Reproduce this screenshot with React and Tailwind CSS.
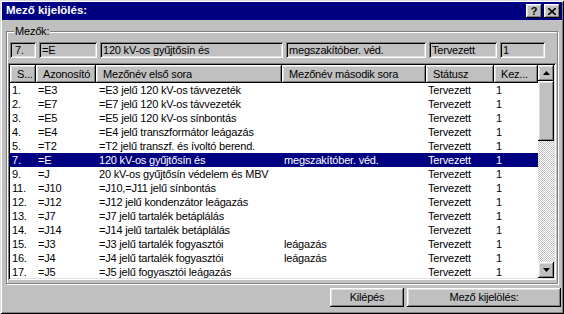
import React from "react";

const rows = [
  ["1.", "=E3", "=E3 jelű 120 kV-os távvezeték", ""],
  ["2.", "=E7", "=E7 jelű 120 kV-os távvezeték", ""],
  ["3.", "=E5", "=E5 jelű 120 kV-os sínbontás", ""],
  ["4.", "=E4", "=E4 jelű transzformátor leágazás", ""],
  ["5.", "=T2", "=T2 jelű transzf. és ívoltó berend.", ""],
  ["7.", "=E", "120 kV-os gyűjtősín és", "megszakítóber. véd."],
  ["9.", "=J", "20 kV-os gyűjtősín védelem és MBV", ""],
  ["11.", "=J10", "=J10,=J11 jelű sínbontás", ""],
  ["12.", "=J12", "=J12 jelű kondenzátor leágazás", ""],
  ["13.", "=J7", "=J7 jelű tartalék betáplálás", ""],
  ["14.", "=J14", "=J14 jelű tartalék betáplálás", ""],
  ["15.", "=J3", "=J3 jelű tartalék fogyasztói", "leágazás"],
  ["16.", "=J4", "=J4 jelű tartalék fogyasztói", "leágazás"],
  ["17.", "=J5", "=J5 jelű fogyasztói leágazás", ""],
];

const raised =
  "shadow-[inset_-1px_-1px_#000,inset_1px_1px_#fff,inset_-2px_-2px_#808080,inset_2px_2px_#dfdfdf]";
const sunken =
  "shadow-[inset_1px_1px_#808080,inset_-1px_-1px_#fff,inset_2px_2px_#000,inset_-2px_-2px_#dfdfdf]";

function Field({ w, children }) {
  return (
    <div className={`${w} h-[16px] ${sunken} pl-[3px] flex items-center leading-none overflow-hidden whitespace-nowrap`}>
      {children}
    </div>
  );
}

function HeadCell({ w, children }) {
  return (
    <div className={`${w} h-full ${raised} pl-[7px] flex items-center whitespace-nowrap overflow-hidden shrink-0`}>
      {children}
    </div>
  );
}

function Arrow({ up }) {
  return (
    <svg width="7" height="4" viewBox="0 0 7 4">
      <polygon points={up ? "3.5,0 7,4 0,4" : "0,0 7,0 3.5,4"} fill="#000" />
    </svg>
  );
}

export default function App() {
  return (
    <div className="w-[564px] h-[314px] bg-[#c0c0c0] p-[2px] flex flex-col text-[11px] tracking-[-0.2px] text-black font-['Liberation_Sans',Arial,sans-serif] shadow-[inset_1px_1px_#dfdfdf,inset_-1px_-1px_#000,inset_2px_2px_#fff,inset_-2px_-2px_#808080]">
      <div className="h-[18px] bg-[#000080] flex items-center pl-[4px] pr-[2px] shrink-0">
        <span className="text-white font-bold text-[11.5px] tracking-normal leading-none">Mező kijelölés:</span>
        <div className="ml-auto flex gap-[2px]">
          <div className={`w-[16px] h-[14px] bg-[#c0c0c0] ${raised} flex items-center justify-center font-bold text-[11px] leading-none`}>?</div>
          <div className={`w-[16px] h-[14px] bg-[#c0c0c0] ${raised} flex items-center justify-center`}>
            <svg width="8" height="7" viewBox="0 0 8 7">
              <path d="M0 0 L8 7 M8 0 L0 7" stroke="#000" strokeWidth="1.6" />
            </svg>
          </div>
        </div>
      </div>

      <div className="relative mt-[11px] ml-[4px] w-[552px] h-[253px] border border-[#808080] shadow-[inset_1px_1px_#fff,1px_1px_#fff] pl-[1px] pt-[10px] flex flex-col">
        <span className="absolute left-[7px] top-[-6px] bg-[#c0c0c0] px-[1px] leading-none">Mezők:</span>
        <div className="flex gap-[3px] ml-[2px]">
          <Field w="w-[26px]"><span className="pl-[2px]">7.</span></Field>
          <Field w="w-[58px]">=E</Field>
          <Field w="w-[183px]">120 kV-os gyűjtősín és</Field>
          <Field w="w-[140px]">megszakítóber. véd.</Field>
          <Field w="w-[68px]">Tervezett</Field>
          <Field w="w-[45px]">1</Field>
        </div>

        <div className={`mt-[5px] w-[548px] h-[217px] bg-white ${sunken} p-[2px] flex`}>
          <div className="flex-1 flex flex-col overflow-hidden">
            <div className="h-[18px] flex bg-[#c0c0c0] shrink-0">
              <HeadCell w="w-[26px]">S...</HeadCell>
              <HeadCell w="w-[60px]">Azonosító</HeadCell>
              <HeadCell w="w-[186px]">Mezőnév első sora</HeadCell>
              <HeadCell w="w-[144px]">Mezőnév második sora</HeadCell>
              <HeadCell w="w-[68px]">Státusz</HeadCell>
              <HeadCell w="w-[44px]">Kez...</HeadCell>
            </div>
            {rows.map((r, i) => {
              const sel = r[0] === "7.";
              return (
                <div
                  key={i}
                  className={`h-[14px] flex items-center shrink-0 whitespace-nowrap leading-none ${sel ? "bg-[#000080] text-white" : ""}`}
                >
                  <div className="w-[26px] pl-[2px] shrink-0">{r[0]}</div>
                  <div className="w-[60px] pl-[2px] shrink-0">{r[1]}</div>
                  <div className="w-[186px] pl-[3px] shrink-0">{r[2]}</div>
                  <div className="w-[144px] pl-[2px] shrink-0">{r[3]}</div>
                  <div className="w-[68px] pl-[2px] shrink-0">Tervezett</div>
                  <div className="w-[44px] pl-[2px] shrink-0">1</div>
                </div>
              );
            })}
          </div>
          <div className="w-[16px] h-full flex flex-col shrink-0">
            <div className={`h-[16px] bg-[#c0c0c0] ${raised} flex items-center justify-center`}>
              <Arrow up />
            </div>
            <div className="flex-1 flex flex-col bg-[repeating-conic-gradient(#c0c0c0_0_25%,#fff_0_50%)] bg-[length:2px_2px]">
              <div className={`h-[60px] bg-[#c0c0c0] ${raised}`} />
            </div>
            <div className={`h-[16px] bg-[#c0c0c0] ${raised} flex items-center justify-center`}>
              <Arrow />
            </div>
          </div>
        </div>
      </div>

      <div className="flex justify-end gap-[3px] mt-[4px] pr-[1px]">
        <div className={`w-[74px] h-[19px] ${raised} flex items-center justify-center`}>Kilépés</div>
        <div className={`w-[154px] h-[19px] ${raised} flex items-center justify-center`}>Mező kijelölés:</div>
      </div>
    </div>
  );
}
